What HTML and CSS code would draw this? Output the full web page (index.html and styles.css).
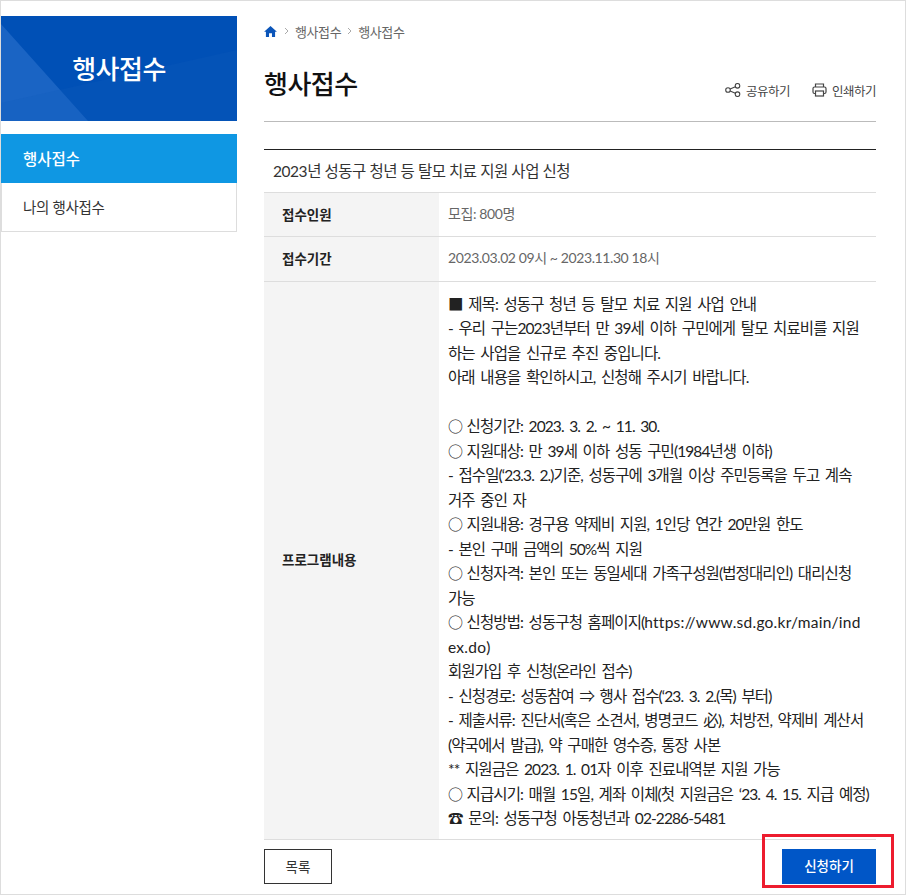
FILE: index.html
```html
<!DOCTYPE html>
<html lang="ko">
<head>
<meta charset="utf-8">
<title>행사접수</title>
<link rel="stylesheet" href="styles.css">
</head>
<body>
<div class="page">
  <aside class="side">
    <div class="side-head">
      <svg class="side-bg" viewBox="0 0 236 105" preserveAspectRatio="none" aria-hidden="true">
        <polygon points="0,0 0,105 87,105 0,8" fill="#1a64c4"/>
        <polygon points="0,105 0,87 236,34 236,105" fill="#0f5bbd" opacity="0.25"/>
      </svg>
      <h2 class="side-title">행사접수</h2>
    </div>
    <ul class="side-menu">
      <li class="side-item side-item-on">행사접수</li>
      <li class="side-item">나의 행사접수</li>
    </ul>
  </aside>
  <main class="main">
    <nav class="crumbs">
      <svg class="home" viewBox="0 0 14 12" aria-hidden="true"><path d="M7 0 L14 6.4 H12 V12 H8.6 V8 H5.4 V12 H2 V6.4 H0 Z" fill="#0b55b9"/></svg>
      <svg class="chev" viewBox="0 0 5 8" aria-hidden="true"><path d="M1 1 L4 4 L1 7" fill="none" stroke="#aaa"/></svg>
      <span>행사접수</span>
      <svg class="chev" viewBox="0 0 5 8" aria-hidden="true"><path d="M1 1 L4 4 L1 7" fill="none" stroke="#aaa"/></svg>
      <span>행사접수</span>
    </nav>
    <header class="head">
      <h1 class="title">행사접수</h1>
      <div class="tools">
        <span class="tool">
          <svg class="ico" viewBox="0 0 16 14" aria-hidden="true"><g fill="none" stroke="#444" stroke-width="1.1"><circle cx="3" cy="7" r="2.3"/><circle cx="12.5" cy="2.8" r="2.3"/><circle cx="12.5" cy="11.2" r="2.3"/><path d="M5.1 6 L10.4 3.7 M5.1 8 L10.4 10.3"/></g></svg>
          공유하기
        </span>
        <span class="tool">
          <svg class="ico ico-print" viewBox="0 0 15 14" aria-hidden="true"><g fill="none" stroke="#444" stroke-width="1.2"><path d="M3.5 4 V1 H11.5 V4"/><rect x="1" y="4" width="13" height="6.5" rx="1.5"/><rect x="3.5" y="8" width="8" height="5" fill="#fff"/></g></svg>
          인쇄하기
        </span>
      </div>
    </header>
    <section class="board">
      <div class="board-title">2023년 성동구 청년 등 탈모 치료 지원 사업 신청</div>
      <div class="row">
        <div class="th">접수인원</div>
        <div class="td td-muted">모집: 800명</div>
      </div>
      <div class="row">
        <div class="th">접수기간</div>
        <div class="td td-muted">2023.03.02 09시 ~ 2023.11.30 18시</div>
      </div>
      <div class="row">
        <div class="th">프로그램내용</div>
        <div class="td td-body">■ 제목: 성동구 청년 등 탈모 치료 지원 사업 안내<br>- 우리 구는2023년부터 만 39세 이하 구민에게 탈모 치료비를 지원<br>하는 사업을 신규로 추진 중입니다.<br>아래 내용을 확인하시고, 신청해 주시기 바랍니다.<br><br><span class="sym">○</span> 신청기간: 2023. 3. 2. ~ 11. 30.<br><span class="sym">○</span> 지원대상: 만 39세 이하 성동 구민(1984년생 이하)<br>- 접수일(‘23.3. 2.)기준, 성동구에 3개월 이상 주민등록을 두고 계속<br>거주 중인 자<br><span class="sym">○</span> 지원내용: 경구용 약제비 지원, 1인당 연간 20만원 한도<br>- 본인 구매 금액의 50%씩 지원<br><span class="sym">○</span> 신청자격: 본인 또는 동일세대 가족구성원(법정대리인) 대리신청<br>가능<br><span class="sym">○</span> 신청방법: 성동구청 홈페이지(<span class="url">https://www.sd.go.kr/main/ind</span><br><span class="url">ex.do</span>)<br>회원가입 후 신청(온라인 접수)<br>- 신청경로: 성동참여 ⇒ 행사 접수(‘23. 3. 2.(목) 부터)<br>- 제출서류: 진단서(혹은 소견서, 병명코드 必), 처방전, 약제비 계산서<br>(약국에서 발급), 약 구매한 영수증, 통장 사본<br>** 지원금은 2023. 1. 01자 이후 진료내역분 지원 가능<br><span class="sym">○</span> 지급시기: 매월 15일, 계좌 이체(첫 지원금은 ‘23. 4. 15. 지급 예정)<br>☎ 문의: 성동구청 아동청년과 02-2286-5481</div>
      </div>
    </section>
    <div class="actions">
      <a class="btn btn-line">목록</a>
      <span class="apply">
        <a class="btn btn-fill">신청하기</a>
        <span class="mark"></span>
      </span>
    </div>
  </main>
</div>
</body>
</html>
```
FILE: styles.css
```css
* { box-sizing: border-box; }
html, body { margin: 0; padding: 0; }
body {
  font-family: Lato, "Noto Sans CJK KR", "Noto Sans", sans-serif;
  color: #222;
  background: #fff;
}
.page {
  width: 906px;
  height: 895px;
  border: 1px solid #ddd;
  padding-top: 15px;
  display: flex;
  overflow: hidden;
}
.side { width: 236px; flex: none; }
.side-head {
  position: relative;
  height: 105px;
  padding-bottom: 2px;
  background: #0050b6;
  display: flex;
  align-items: center;
  justify-content: center;
  overflow: hidden;
}
.side-bg { position: absolute; left: 0; top: 0; width: 100%; height: 100%; }
.side-title {
  position: relative;
  margin: 0;
  color: #fff;
  font-size: 26px;
  font-weight: 500;
  letter-spacing: -0.5px;
}
.side-menu { list-style: none; margin: 13px 0 0; padding: 0; }
.side-item {
  height: 49px;
  line-height: 49px;
  padding-left: 21px;
  font-size: 14.5px;
  letter-spacing: -0.3px;
  color: #333;
  border: 1px solid #ddd;
  border-top: 0;
}
.side-item-on {
  background: #0f97e3;
  border: 0;
  color: #fff;
  padding-left: 22px;
  line-height: 50px;
  font-size: 15.5px;
  font-weight: 500;
  letter-spacing: 0;
}
.main { width: 612px; margin-left: 27px; flex: none; }
.crumbs {
  height: 30px;
  display: flex;
  align-items: center;
  gap: 6px;
  font-size: 13px;
  color: #666;
  letter-spacing: -0.4px;
}
.home { width: 13px; height: 11px; margin-right: 1px; }
.chev { width: 5px; height: 8px; }
.head {
  height: 76px;
  border-bottom: 1px solid #bbb;
  display: flex;
  justify-content: space-between;
}
.title {
  margin: 18px 0 0;
  font-size: 26px;
  font-weight: 500;
  line-height: 40px;
  color: #111;
  letter-spacing: -0.5px;
}
.tools { display: flex; gap: 22px; padding-top: 34px; }
.tool {
  display: flex;
  align-items: center;
  gap: 5px;
  height: 20px;
  font-size: 12.5px;
  color: #444;
  letter-spacing: -0.5px;
}
.ico { width: 16px; height: 14px; }
.ico-print { width: 15px; }
.board { margin-top: 27px; border-top: 1px solid #222; }
.board-title {
  height: 43px;
  line-height: 42px;
  padding-left: 9px;
  font-size: 15.5px;
  letter-spacing: -0.45px;
  color: #333;
  border-bottom: 1px solid #ddd;
}
.row { display: flex; border-bottom: 1px solid #ddd; }
.th {
  width: 175px;
  flex: none;
  background: #f4f4f4;
  display: flex;
  align-items: center;
  padding-left: 18px;
  padding-bottom: 2px;
  font-size: 13.5px;
  font-weight: 700;
  color: #222;
}
.td { flex: 1; padding-left: 9px; }
.td-muted {
  height: 43.3px;
  line-height: 42px;
  font-size: 14px;
  color: #666;
  letter-spacing: -0.4px;
}
.td-body {
  padding: 10px 0 8px 9px;
  font-size: 15.5px;
  line-height: 24.52px;
  color: #222;
  letter-spacing: -0.9px;
  word-spacing: 2.5px;
  white-space: nowrap;
}
.sym {
  font-family: "Noto Sans CJK KR", sans-serif;
  font-size: 15px;
  letter-spacing: -2px;
}
.url { letter-spacing: 0.25px; }
.actions {
  margin-top: 9px;
  display: flex;
  justify-content: space-between;
  align-items: flex-start;
}
.btn {
  display: block;
  height: 35px;
  line-height: 34px;
  text-align: center;
  font-size: 13.5px;
}
.btn-line { width: 68px; border: 1px solid #333; color: #333; }
.btn-fill { width: 94px; background: #0056c7; color: #fff; font-weight: 500; }
.apply { position: relative; display: block; }
.mark {
  position: absolute;
  left: -20px;
  right: -18px;
  top: -15px;
  bottom: -4px;
  border: 3px solid #ed1c2e;
  pointer-events: none;
}
```
